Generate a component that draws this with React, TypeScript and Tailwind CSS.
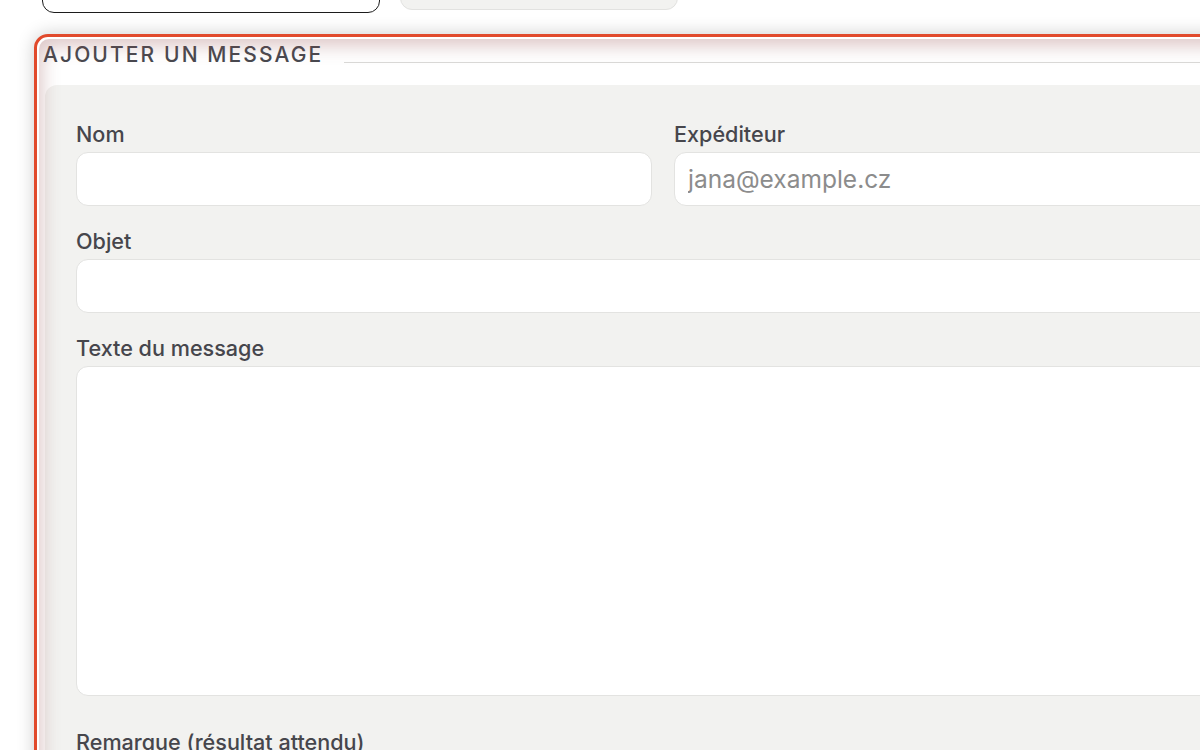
// App.tsx - formulaire "Ajouter un message"

const Label = ({ children }: { children: string }) => (
    <p className="mb-[4px] text-[21.6px] leading-[28px] font-medium text-[#46464c]">{children}</p>
);

const Field = ({ label, placeholder }: { label: string; placeholder?: string }) => (
    <div className="flex flex-col">
        <Label>{label}</Label>
        <input
            type="text"
            placeholder={placeholder}
            className="h-[54px] w-full rounded-[12px] border border-[#e3e3e1] bg-white px-[13px] text-[24.5px] text-[#333] placeholder:text-[#8c8c8c] outline-none"
        />
    </div>
);

const App = () => {
    return (
        <div className="h-[750px] w-[1200px] overflow-hidden bg-white font-['Inter','Noto_Sans',sans-serif]">
            {/* boutons du haut, coupés par le bord */}
            <div className="-mt-[40px] flex items-start gap-[20px] pl-[42px]">
                <div className="h-[53px] w-[338px] rounded-[12px] border-[1.5px] border-[#1c1c1c] bg-white" />
                <div className="h-[50px] w-[278px] rounded-[12px] border border-[#e2e2e0] bg-[#f2f2f0]" />
            </div>

            <div className="ml-[34px] mt-[21px] w-[1300px] rounded-[14px] border-[3px] border-[#e14a2c] bg-white p-[2px] shadow-[0_0_18px_rgba(0,0,0,0.2)]">
                <div className="relative rounded-[10px] pl-[4px] pt-[2px]">
                    <div className="flex items-start">
                        <h2 className="text-[21px] leading-[28px] font-medium tracking-[0.1em] text-[#48484e]">
                            AJOUTER UN MESSAGE
                        </h2>
                        <div className="ml-[21px] mt-[21px] h-px flex-1 bg-[#dadad8]" />
                    </div>

                    <div className="ml-[2px] mt-[16px] rounded-tl-[12px] bg-[#f2f2f0] pl-[31px] pr-[50px] pt-[35px]">
                        <div className="grid w-[1174px] grid-cols-2 gap-x-[22px]">
                            <Field label="Nom" />
                            <Field label="Expéditeur" placeholder="jana@example.cz" />
                        </div>
                        <div className="mt-[21px] w-[1174px]">
                            <Field label="Objet" />
                        </div>
                        <div className="mt-[21px] flex w-[1174px] flex-col">
                            <Label>Texte du message</Label>
                            <textarea className="h-[330px] w-full resize-none rounded-[12px] border border-[#e3e3e1] bg-white outline-none" />
                        </div>
                        <div className="mt-[32px] w-[1174px]">
                            <Field label="Remarque (résultat attendu)" />
                        </div>
                    </div>

                    {/* ombre intérieure rosée par-dessus le contenu */}
                    <div className="pointer-events-none absolute inset-0 rounded-[10px] shadow-[inset_3px_7px_18px_rgba(150,80,80,0.32)]" />
                </div>
            </div>
        </div>
    );
};

export default App;
